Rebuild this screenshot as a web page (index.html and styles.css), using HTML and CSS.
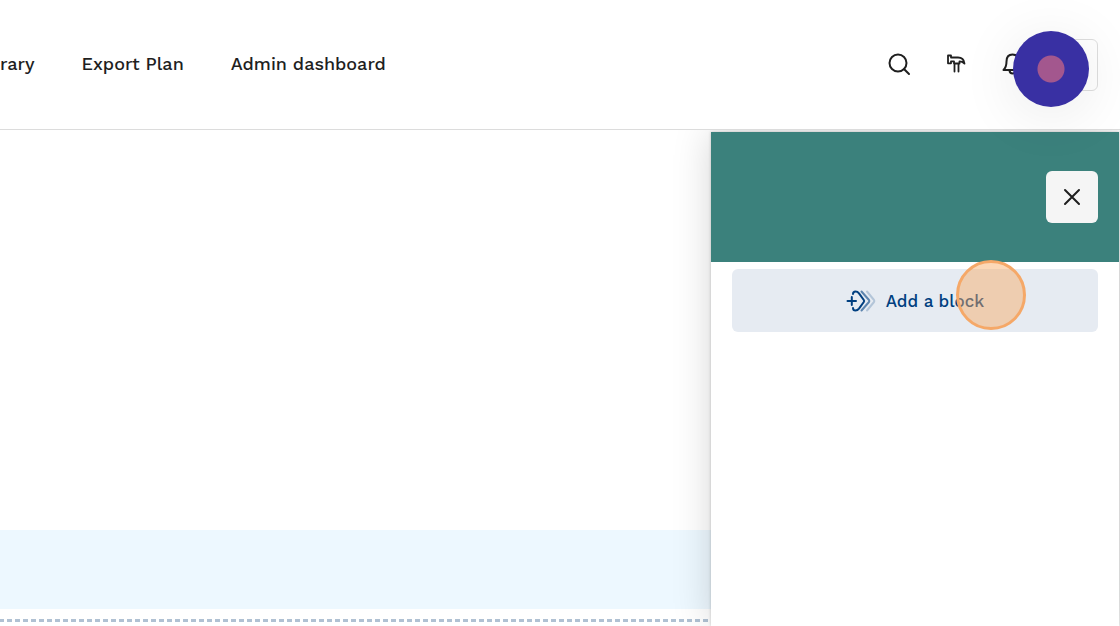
FILE: index.html
```html
<!DOCTYPE html>
<html lang="en">
<head>
  <meta charset="UTF-8" />
  <meta name="viewport" content="width=device-width, initial-scale=1.0"/>
  <title>Admin dashboard</title>
  <link rel="stylesheet" href="styles.css">
</head>
<body>
  <header class="header">
    <nav class="nav">
      <a href="#">rary</a>
      <a href="#">Export Plan</a>
      <a href="#">Admin dashboard</a>
    </nav>
    <div class="tools">
      <button class="icon-btn" aria-label="Search">
        <svg width="24" height="24" viewBox="0 0 24 24"><circle cx="11" cy="11" r="8.500"/><path d="M17.200 17.200L22 22"/></svg>
      </button>
      <button class="icon-btn" aria-label="Tools">
        <svg class="hammer" width="24" height="24" viewBox="0 0 24 24"><path d="M4 3.500h3V5.500h7c4 0 6 2 6.500 6-1.500-1.500-3-2.200-5-2.200v2.200h-5.500V9.300H7v2H4zM10.500 11.500v8M14.500 11.500v8"/></svg>
      </button>
      <button class="icon-btn" aria-label="Notifications">
        <svg width="24" height="24" viewBox="0 0 24 24"><path d="M2.500 18c2-2 3-4 3-8.500C5.500 5 8 2.500 11.500 2.500S17.500 5 17.500 9.500c0 4.500 1 6.500 3 8.500zM8.500 18.500c.3 4 6 4 6.300 0"/></svg>
      </button>
      <div class="account">
        <button class="menu-btn" aria-label="Account"></button>
        <span class="badge"></span>
      </div>
    </div>
  </header>

  <div class="page">
    <main class="canvas">
      <section class="band"></section>
      <div class="drop-line"></div>
    </main>

    <aside class="drawer">
      <div class="drawer-header">
        <button class="close-btn" aria-label="Close">
          <svg width="20" height="20" viewBox="0 0 20 20"><path d="M3 3l14 14M17 3L3 17"/></svg>
        </button>
      </div>
      <div class="drawer-body">
        <button class="add-btn">
          <svg width="30" height="24" viewBox="0 0 30 24">
            <path d="M1.500 12h8.500M5.800 8v8M7 5c0-1.500 1-2.500 2.500-2.500 1.500 0 2.500.5 3.500 1.800L17.800 11c.5.700.5 1.300 0 2L13 19.700c-1 1.300-2 1.800-3.500 1.800C8 21.500 7 20.500 7 19"/>
            <path class="mid" d="M15.500 2.500l7.500 8.500c.5.700.5 1.300 0 2l-7.500 8.500"/>
            <path class="light" d="M21 2.500l7 8.500c.5.700.5 1.300 0 2L21 21.500"/>
          </svg>
          Add a block
        </button>
        <span class="click-marker"></span>
      </div>
    </aside>
  </div>
</body>
</html>
```

FILE: styles.css
```css
* {
  box-sizing: border-box;
}

body {
  font-family: "Work Sans", Inter, "Liberation Sans", sans-serif;
  font-size: 18px;
  font-weight: 500;
  color: #1f1f1f;
  background: #fff;
  margin: 0;
  min-height: 100vh;
  display: flex;
  flex-direction: column;
  overflow: hidden;
}

button {
  font: inherit;
  color: inherit;
  border: none;
  padding: 0;
  cursor: pointer;
}

svg {
  fill: none;
  stroke: currentColor;
  stroke-width: 2;
  stroke-linecap: round;
  stroke-linejoin: round;
}

.header {
  position: relative;
  z-index: 1;
  display: flex;
  justify-content: space-between;
  align-items: center;
  height: 130px;
  padding: 0 22px 2px 0;
  background: #fff;
  border-bottom: 1px solid #dcdcdc;
}

.nav {
  display: flex;
  gap: 47px;
  white-space: nowrap;
}

.nav a {
  color: inherit;
  text-decoration: none;
}

.tools {
  display: flex;
  align-items: center;
  gap: 33px;
}

.icon-btn {
  display: flex;
  background: none;
}

.hammer {
  stroke-width: 1.8;
}

.account {
  position: relative;
  margin: 2px 0 0 -12px;
}

.menu-btn {
  display: block;
  width: 52px;
  height: 52px;
  background: #fff;
  border: 1px solid #dedede;
  border-radius: 6px;
}

.badge {
  position: absolute;
  top: -8px;
  right: 9px;
  width: 76px;
  height: 76px;
  border-radius: 50%;
  background: radial-gradient(circle, #a3578e 13px, #3930a3 14px);
  box-shadow: 0 8px 60px rgba(0, 0, 0, 0.09);
}

.page {
  flex: 1;
  display: flex;
  padding: 2px 1px 0 0;
}

.canvas {
  flex: 1;
  display: flex;
  flex-direction: column;
  justify-content: flex-end;
  gap: 10px;
  padding-bottom: 4px;
}

.band {
  height: 79px;
  background: #edf8ff;
}

.drop-line {
  height: 3px;
  margin-right: 3px;
  background: repeating-linear-gradient(to left, #b0c1d3 0 5px, transparent 5px 8px);
}

.drawer {
  position: relative;
  width: 408px;
  background: #fff;
  box-shadow: 0 0 36px rgba(0, 0, 0, 0.17), 0 0 3px rgba(0, 0, 0, 0.2);
}

.drawer-header {
  display: flex;
  justify-content: flex-end;
  align-items: center;
  height: 130px;
  padding: 0 21px;
  background: #3b817c;
}

.close-btn {
  display: flex;
  justify-content: center;
  align-items: center;
  width: 52px;
  height: 52px;
  background: #f5f5f5;
  border-radius: 6px;
}

.drawer-body {
  position: relative;
  padding: 7px 21px;
}

.add-btn {
  display: flex;
  justify-content: center;
  align-items: center;
  gap: 10px;
  width: 100%;
  height: 63px;
  font-size: 17px;
  color: #003f80;
  background: #e6ebf2;
  border-radius: 6px;
}

.mid {
  opacity: 0.6;
}

.light {
  opacity: 0.22;
}

.click-marker {
  position: absolute;
  top: -2px;
  right: 93px;
  width: 70px;
  height: 70px;
  border: 3px solid #f5a868;
  border-radius: 50%;
  background: rgba(249, 168, 96, 0.45);
  pointer-events: none;
}
```
